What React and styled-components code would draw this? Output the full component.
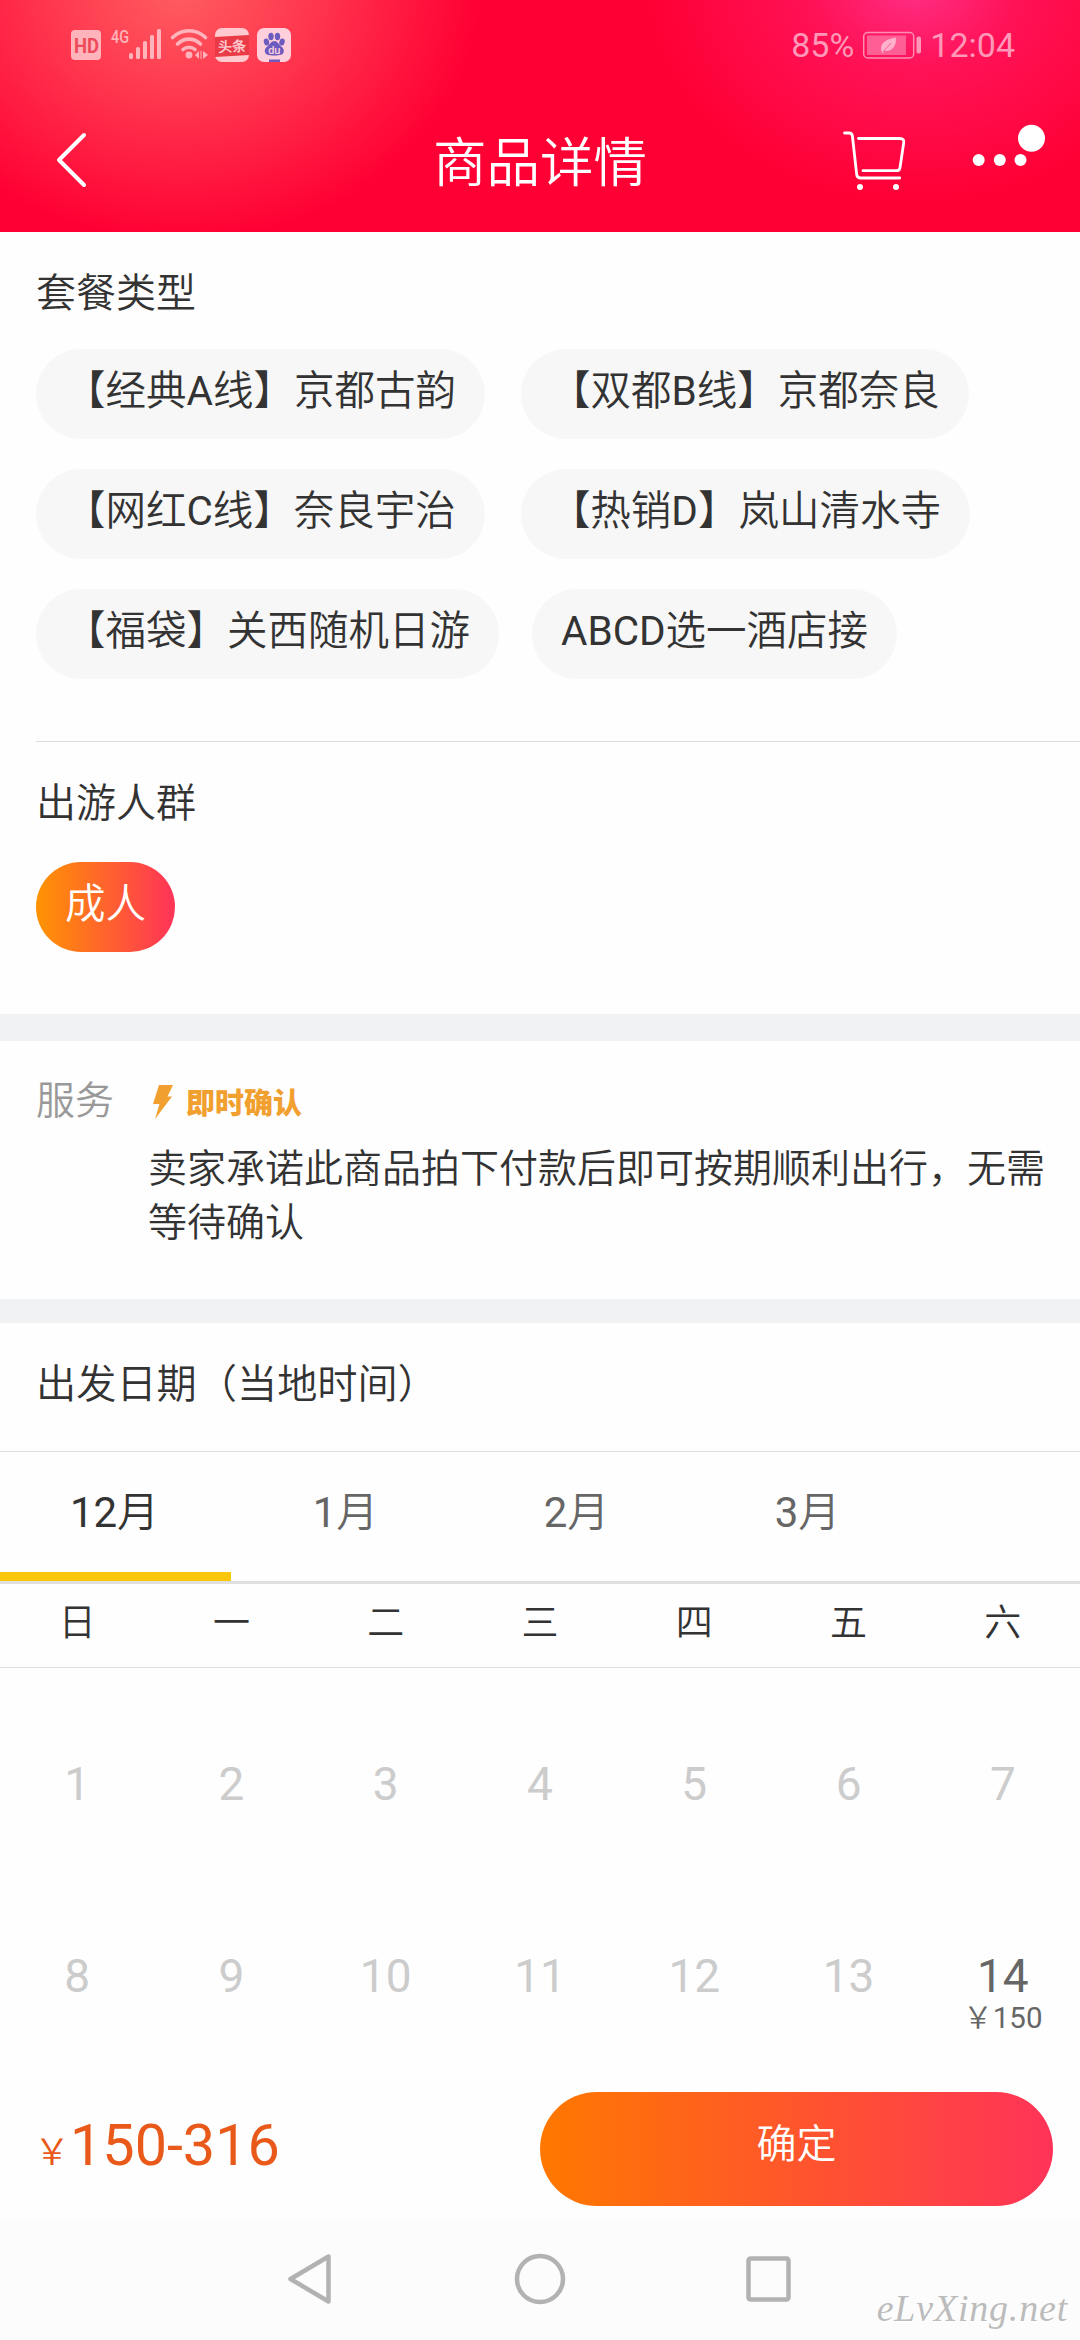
import React, { useState } from 'react';
import styled, { createGlobalStyle } from 'styled-components';

const PACKAGES = [
  ['【经典A线】京都古韵', '【双都B线】京都奈良'],
  ['【网红C线】奈良宇治', '【热销D】岚山清水寺'],
  ['【福袋】关西随机日游', 'ABCD选一酒店接'],
];
const MONTHS = ['12月', '1月', '2月', '3月'];
const WEEK = ['日', '一', '二', '三', '四', '五', '六'];
const DAYS = Array.from({ length: 14 }, (_, i) => ({
  day: i + 1,
  price: i + 1 === 14 ? '￥150' : null,
}));

const FONT = "Roboto, 'Noto Sans CJK SC DemiLight', 'Noto Sans CJK SC', sans-serif";

function StatusIcons() {
  return (
    <svg width='222' height='44' viewBox='70 19 222 44'>
      <g fill='#ffb3ba'>
        <rect x='71' y='30' width='30' height='30' rx='4' />
        <text x='74' y='53' fontSize='21' fontWeight='700' fill='#ee4a5a' textLength='25' lengthAdjust='spacingAndGlyphs'>HD</text>
        <text x='111' y='42.500' fontSize='19' fontWeight='500' textLength='18' lengthAdjust='spacingAndGlyphs'>4G</text>
        <rect x='129' y='53' width='4' height='6' rx='1.500' />
        <rect x='136' y='47' width='4' height='12' rx='1.500' />
        <rect x='143' y='41' width='4' height='18' rx='1.500' />
        <rect x='150' y='35' width='4' height='24' rx='1.500' />
        <rect x='157' y='29' width='4' height='30' rx='1.500' />
        <circle cx='189' cy='55' r='3.400' />
        <path d='M195 55l4-4v8zM203 51l5 4-5 4zM200.500 51h1v8h-1z' />
      </g>
      <g fill='none' stroke='#ffb3ba' strokeWidth='3.600' strokeLinecap='round'>
        <path d='M172.500 37.500C182 28.500 196 28.500 205.500 37.500' />
        <path d='M177.500 44C184.500 37.500 193.500 37.500 200.500 44' />
        <path d='M183 49.500C186.500 46.500 191.500 46.500 195 49.500' />
      </g>
      <rect x='215' y='28' width='34' height='34' rx='7' fill='#ffc9cf' />
      <path d='M215 37l34-2v20l-34 2z' fill='#ea3a45' />
      <text x='218' y='51.500' fontSize='14' fontWeight='700' fill='#ffc9cf' transform='rotate(-2 232 46)'>头条</text>
      <rect x='257' y='28' width='34' height='34' rx='7' fill='#ffcfdc' />
      <g fill='#6d5cc0'>
        <ellipse cx='266.500' cy='42' rx='2.700' ry='3.500' transform='rotate(-12 266.500 42)' />
        <ellipse cx='271' cy='36.500' rx='2.700' ry='3.700' />
        <ellipse cx='277.500' cy='36.500' rx='2.700' ry='3.700' />
        <ellipse cx='282' cy='42' rx='2.700' ry='3.500' transform='rotate(12 282 42)' />
        <path d='M274.300 41c3 0 4.200 3 6.200 4.800 2 1.700 3.700 3.200 3.300 5.700-.5 3.300-3.300 4-9.500 4s-9-.7-9.500-4c-.4-2.500 1.300-4 3.300-5.700 2-1.800 3.200-4.800 6.200-4.800z' />
        <rect x='269' y='59.500' width='11' height='2.500' />
      </g>
      <text x='274.300' y='53.500' fontSize='11' fontWeight='500' fill='#ffcfdc' textAnchor='middle'>du</text>
    </svg>
  );
}

function Battery() {
  return (
    <svg width='60' height='28' viewBox='861 30.500 60 28'>
      <rect x='862.700' y='32' width='50' height='25.500' rx='4' fill='none' stroke='#ff8db2' strokeWidth='1.500' />
      <rect x='866' y='35' width='39' height='19.500' fill='#ff5f95' />
      <path d='M895 37c-9 1.500-15 5-15 11 0 2 1 3.500 1.500 5l2-2.500c8 .500 12-5 11.500-13.500z' fill='#ffb0cb' />
      <path d='M882 51.500l8-9' stroke='#ff5f95' strokeWidth='1' />
      <rect x='915.500' y='36' width='4.500' height='17' rx='2' fill='#ff97b8' />
    </svg>
  );
}

function CartIcon() {
  return (
    <svg width='64' height='62' viewBox='842 129 64 62' fill='none' stroke='#fff' strokeWidth='2.800' strokeLinecap='round' strokeLinejoin='round'>
      <path d='M844.500 133h4.500q3 0 3.400 3l4.300 38.500q.4 3.500 4 3.500h39' />
      <path d='M858.500 138.500h41.500q4.300 0 3.700 4.200l-3.700 25q-.5 3-3.500 3H863' />
      <circle cx='860' cy='187' r='3' fill='#fff' stroke='none' />
      <circle cx='896' cy='187' r='3' fill='#fff' stroke='none' />
    </svg>
  );
}

export default function App() {
  const [month, setMonth] = useState(0);

  return (
    <Screen>
      <GlobalStyle />
      <Header>
        <StatusBar>
          <StatusIcons />
          <StatusRight>
            <span>85%</span>
            <Battery />
            <span>12:04</span>
          </StatusRight>
        </StatusBar>
        <TitleBar>
          <HeaderSide>
            <svg width='34' height='56' viewBox='0 0 34 56' fill='none' stroke='#fff' strokeWidth='4' strokeLinecap='round' strokeLinejoin='round'>
              <path d='M29 3L4 28l25 25' />
            </svg>
          </HeaderSide>
          <Title>商品详情</Title>
          <HeaderSide $right>
            <CartIcon />
            <svg width='74' height='76' viewBox='971 122 74 76' fill='#fff'>
              <circle cx='978.700' cy='160' r='6' />
              <circle cx='999.800' cy='160' r='6' />
              <circle cx='1020.500' cy='160' r='6' />
              <circle cx='1031.500' cy='138.300' r='13.500' />
            </svg>
          </HeaderSide>
        </TitleBar>
      </Header>

      <Section>
        <Heading>套餐类型</Heading>
        <OptionList>
          {PACKAGES.map((row, i) => (
            <OptionRow key={i} $gap={i === 2 ? 33 : 36}>
              {row.map((name) => (
                <Option key={name}>{name}</Option>
              ))}
            </OptionRow>
          ))}
        </OptionList>
      </Section>
      <Divider />
      <Section>
        <Heading $space={28}>出游人群</Heading>
        <OptionRow>
          <Option $active>成人</Option>
        </OptionRow>
      </Section>
      <Band $size={27} />

      <Service>
        <ServiceLabel>服务</ServiceLabel>
        <ServiceBody>
          <Badge>
            <svg width='20' height='34' viewBox='0 0 20 34'>
              <path d='M6 0h14l-5.500 11.500H19L2 34l4.500-15H0z' fill='#f1a02f' />
            </svg>
            即时确认
          </Badge>
          <ServiceText>卖家承诺此商品拍下付款后即可按期顺利出行，无需等待确认</ServiceText>
        </ServiceBody>
      </Service>
      <Band $size={24} />

      <DateHeading>出发日期（当地时间）</DateHeading>
      <Tabs>
        {MONTHS.map((name, i) => (
          <Tab key={name} $active={i === month} onClick={() => setMonth(i)}>
            {name}
          </Tab>
        ))}
      </Tabs>
      <WeekRow>
        {WEEK.map((name) => (
          <span key={name}>{name}</span>
        ))}
      </WeekRow>
      <Calendar>
        {DAYS.map(({ day, price }) => (
          <Day key={day} $open={!!price}>
            {day}
            {price && <DayPrice>{price}</DayPrice>}
          </Day>
        ))}
      </Calendar>

      <BottomBar>
        <Price>
          <Yen>￥</Yen>150-316
        </Price>
        <Confirm>确定</Confirm>
      </BottomBar>
      <NavBar>
        <svg width='50' height='54' viewBox='285 2252 50 54'>
          <path d='M327.500 2256.500v45L289.500 2279z' />
        </svg>
        <svg width='52' height='54' viewBox='514 2252 52 54'>
          <circle cx='540' cy='2279' r='23' />
        </svg>
        <svg width='50' height='54' viewBox='744 2252 50 54'>
          <rect x='748.500' y='2258.500' width='40' height='41' rx='2' />
        </svg>
        <Watermark>eLvXing.net</Watermark>
      </NavBar>
    </Screen>
  );
}

const GlobalStyle = createGlobalStyle`
  * {
    box-sizing: border-box;
  }
  body {
    margin: 0;
    background: #fefefe;
  }
  svg {
    display: block;
    flex-shrink: 0;
  }
`;

const Screen = styled.div`
  display: flex;
  flex-direction: column;
  width: 1080px;
  height: 2340px;
  overflow: hidden;
  background: #fefefe;
  color: #333;
  font-family: ${FONT};
`;

const Header = styled.header`
  height: 232px;
  padding-top: 19px;
  background:
    radial-gradient(ellipse 300px 250px at 180px -10px, #ff5d61 0%, rgba(255, 80, 90, 0.75) 38%, rgba(255, 50, 80, 0) 100%),
    radial-gradient(ellipse 270px 220px at 915px -15px, #ff2f86 0%, rgba(255, 30, 110, 0.6) 38%, rgba(255, 0, 70, 0) 100%),
    #ff0034;
`;

const StatusBar = styled.div`
  display: flex;
  align-items: flex-end;
  justify-content: space-between;
  height: 44px;
  padding: 0 65px 0 70px;
`;

const StatusRight = styled.div`
  display: flex;
  align-items: center;
  gap: 8px;
  color: #ff97b8;
  font-size: 34px;
  line-height: 36px;
`;

const TitleBar = styled.div`
  display: flex;
  align-items: center;
  height: 169px;
  padding: 25px 35px 0 55px;
`;

const HeaderSide = styled.div`
  display: flex;
  align-items: center;
  justify-content: ${(props) => (props.$right ? 'flex-end' : 'flex-start')};
  gap: 65px;
  width: ${(props) => (props.$right ? '380px' : '360px')};
`;

const Title = styled.h1`
  flex: 1;
  margin: 0;
  padding-top: 8px;
  color: #fff;
  font-size: 53.5px;
  font-weight: 400;
  line-height: 64px;
  text-align: center;
  white-space: nowrap;
`;

const Section = styled.section`
  padding: 32px 36px 62px;
`;

const Heading = styled.h2`
  margin: 0 0 ${(props) => props.$space || 25}px;
  font-size: 40px;
  font-weight: 400;
  line-height: 60px;
`;

const OptionList = styled.div`
  display: flex;
  flex-direction: column;
  gap: 30px;
`;

const OptionRow = styled.div`
  display: flex;
  gap: ${(props) => props.$gap || 36}px;
`;

const Option = styled.button`
  height: 90px;
  padding: 0 29px 5px;
  border: 0;
  border-radius: 45px;
  background: ${(props) => (props.$active ? 'linear-gradient(90deg, #ff9402, #ff3358)' : '#f7f7f7')};
  color: ${(props) => (props.$active ? '#fff' : '#333')};
  font-family: inherit;
  font-size: 40.5px;
  line-height: 85px;
  white-space: nowrap;
`;

const Divider = styled.div`
  height: 1px;
  margin-left: 36px;
  background: #ddd;
`;

const Band = styled.div`
  height: ${(props) => props.$size}px;
  background: #f1f2f4;
`;

const Service = styled.section`
  display: flex;
  height: 258px;
  padding: 38px 32px 0 36px;
`;

const ServiceLabel = styled.span`
  width: 112px;
  color: #999;
  font-size: 39px;
  line-height: 45px;
`;

const ServiceBody = styled.div`
  flex: 1;
`;

const Badge = styled.div`
  display: flex;
  align-items: center;
  gap: 13px;
  height: 45px;
  margin-bottom: 18px;
  padding-left: 5px;
  color: #f1a02f;
  font-family: 'Noto Sans CJK SC', sans-serif;
  font-size: 29px;
  font-weight: 900;
  line-height: 41px;
`;

const ServiceText = styled.p`
  margin: 0;
  font-size: 39px;
  line-height: 54px;
`;

const DateHeading = styled.h2`
  height: 129px;
  margin: 0;
  padding-left: 36px;
  border-bottom: 1px solid #ddd;
  font-size: 40.2px;
  font-weight: 400;
  line-height: 123px;
`;

const Tabs = styled.div`
  display: flex;
  height: 132px;
  border-bottom: 3px solid #e0e0e0;
`;

const Tab = styled.div`
  width: 231px;
  padding-right: 2px;
  border-bottom: 9px solid ${(props) => (props.$active ? '#fbc70c' : 'transparent')};
  color: ${(props) => (props.$active ? '#333' : '#666')};
  font-size: 42px;
  line-height: 122px;
  text-align: center;
`;

const WeekRow = styled.div`
  display: grid;
  grid-template-columns: repeat(7, 1fr);
  height: 84px;
  border-bottom: 1px solid #ddd;
  font-size: 37px;
  line-height: 79px;
  text-align: center;
`;

const Calendar = styled.div`
  display: grid;
  grid-template-columns: repeat(7, 1fr);
  grid-auto-rows: 192px;
`;

const Day = styled.div`
  display: flex;
  flex-direction: column;
  align-items: center;
  padding-top: 88px;
  color: ${(props) => (props.$open ? '#666' : '#ccc')};
  font-size: 46px;
  line-height: 56px;
`;

const DayPrice = styled.span`
  font-size: 29.5px;
  line-height: 28px;
`;

const BottomBar = styled.div`
  display: flex;
  align-items: center;
  justify-content: space-between;
  height: 166px;
  padding: 40px 27px 12px 34px;
`;

const Price = styled.div`
  padding-top: 1px;
  color: #e8591a;
  font-size: 57.5px;
  line-height: 68px;
`;

const Yen = styled.span`
  font-size: 36px;
`;

const Confirm = styled.button`
  width: 513px;
  height: 114px;
  padding: 0 0 9px;
  border: 0;
  border-radius: 57px;
  background: linear-gradient(90deg, #ff7800, #ff3358);
  color: #fff;
  font-family: inherit;
  font-size: 40px;
  line-height: 105px;
`;

const NavBar = styled.nav`
  position: relative;
  display: flex;
  align-items: center;
  justify-content: center;
  gap: 178px;
  height: 122px;
  background: #fcfcfc;

  svg {
    fill: none;
    stroke: #b2b2b2;
    stroke-width: 4.5px;
    stroke-linejoin: round;
  }
`;

const Watermark = styled.span`
  position: absolute;
  right: 12px;
  bottom: 10px;
  color: #bcbcbc;
  font-family: 'Liberation Serif', cursive;
  font-size: 38px;
  font-style: italic;
  letter-spacing: 0.8px;
  line-height: 44px;
  text-shadow: 1px 1px 0 #fff;
`;
